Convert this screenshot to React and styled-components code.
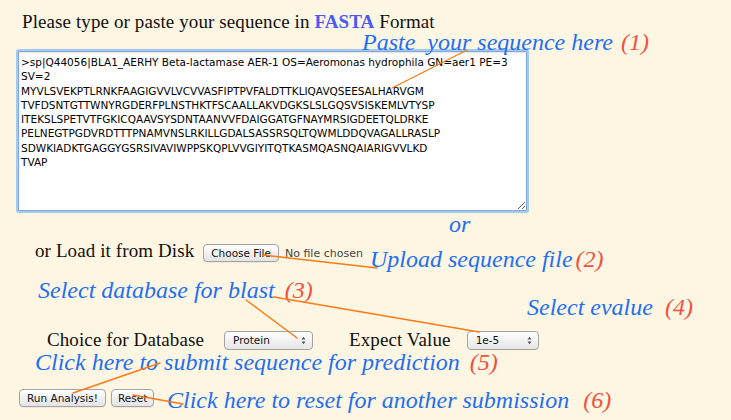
import React from "react";
import styled, { createGlobalStyle } from "styled-components";

const Global = createGlobalStyle`
  html, body { margin: 0; padding: 0; background: #fdf6e3; }
  body { font-family: "Liberation Serif", serif; }
`;

const Page = styled.div`
  position: relative;
  width: 731px;
  height: 420px;
  overflow: hidden;
  background: #fdf6e3;
  padding-top: 10px;
  box-sizing: border-box;
`;

const Heading = styled.h1`
  margin: 0 0 18px 22px;
  font-family: "Liberation Serif", serif;
  font-weight: normal;
  font-size: 19px;
  letter-spacing: 0.1px;
  line-height: 23px;
  color: #111;
`;

const Fasta = styled.span`
  color: #4b5bf2;
  font-weight: bold;
`;

const SeqBox = styled.textarea`
  display: block;
  margin-left: 18px;
  width: 509px;
  height: 160px;
  box-sizing: border-box;
  padding: 3px 2px;
  border: 1px solid #7fa9dc;
  box-shadow: 0 0 0 2px #a9c8ee, inset 0 1px 2px rgba(0,0,0,0.12);
  border-radius: 1px;
  font-family: "DejaVu Sans", sans-serif;
  font-size: 10.5px;
  line-height: 14.3px;
  color: #000;
  background: #fff;
  resize: both;
  overflow: hidden;
  white-space: pre;
  outline: none;
`;

const Row = styled.div`
  display: flex;
  align-items: baseline;
  gap: ${(p) => p.gap || 0}px;
  margin-left: ${(p) => p.indent}px;
  margin-top: ${(p) => p.top}px;
`;

const Label = styled.span`
  font-family: "Liberation Serif", serif;
  font-size: 19px;
  letter-spacing: 0.1px;
  color: #111;
  margin-left: ${(p) => p.before || 0}px;
  margin-right: ${(p) => p.after || 0}px;
`;

const MacButton = styled.button`
  font-family: "DejaVu Sans", sans-serif;
  font-size: 10.5px;
  height: 18px;
  padding: 0 ${(p) => p.pad || 7}px;
  border: 1px solid #a3a3a3;
  border-radius: 4px;
  background: linear-gradient(#ffffff, #f0f0f0 50%, #e4e4e4);
  color: #111;
  box-shadow: 0 1px 0 rgba(0,0,0,0.05);
  margin: 0;
`;

const Muted = styled.span`
  font-family: "DejaVu Sans", sans-serif;
  font-size: 11px;
  color: #444;
  margin-left: 6px;
`;

const FakeSelect = styled.div`
  display: flex;
  align-items: center;
  justify-content: space-between;
  box-sizing: border-box;
  width: ${(p) => p.w}px;
  height: 19px;
  padding: 0 6px 0 8px;
  border: 1px solid #a3a3a3;
  border-radius: 4px;
  background: linear-gradient(#ffffff, #f2f2f2 50%, #e6e6e6);
  font-family: "DejaVu Sans", sans-serif;
  font-size: 10.5px;
  color: #111;
  align-self: center;
`;

const Buttons = styled.div`
  display: flex;
  gap: 5px;
  margin: ${(p) => p.top}px 0 0 19px;
`;

const Note = styled.div`
  position: absolute;
  left: ${(p) => p.x}px;
  top: ${(p) => p.y}px;
  white-space: nowrap;
  font-family: "Liberation Serif", serif;
  font-style: italic;
  font-size: 24px;
  line-height: 24px;
  color: #1f6ff0;
`;

const Num = styled.span`
  color: #f2503c;
  margin-left: ${(p) => p.gap || 6}px;
`;

const Lines = styled.svg`
  position: absolute;
  left: 0;
  top: 0;
  pointer-events: none;
`;

const Arrows = () => (
  <svg width="5" height="9" viewBox="0 0 5 9">
    <path d="M0.5 3.5 L2.5 0.8 L4.5 3.5 Z M0.5 5.5 L2.5 8.2 L4.5 5.5 Z" fill="#555" />
  </svg>
);

const SEQ = `>sp|Q44056|BLA1_AERHY Beta-lactamase AER-1 OS=Aeromonas hydrophila GN=aer1 PE=3
SV=2
MYVLSVEKPTLRNKFAAGIGVVLVCVVASFIPTPVFALDTTKLIQAVQSEESALHARVGM
TVFDSNTGTTWNYRGDERFPLNSTHKTFSCAALLAKVDGKSLSLGQSVSISKEMLVTYSP
ITEKSLSPETVTFGKICQAAVSYSDNTAANVVFDAIGGATGFNAYMRSIGDEETQLDRKE
PELNEGTPGDVRDTTTPNAMVNSLRKILLGDALSASSRSQLTQWMLDDQVAGALLRASLP
SDWKIADKTGAGGYGSRSIVAVIWPPSKQPLVVGIYITQTKASMQASNQAIARIGVVLKD
TVAP`;

export default function App() {
  return (
    <Page>
      <Global />
      <Heading>
        Please type or paste your sequence in <Fasta>FASTA</Fasta> Format
      </Heading>
      <SeqBox defaultValue={SEQ} spellCheck={false} />
      <Row indent={35} top={29} gap={0}>
        <Label after={9}>or Load it from Disk</Label>
        <MacButton>Choose File</MacButton>
        <Muted>No file chosen</Muted>
      </Row>
      <Row indent={47} top={67} gap={0}>
        <Label after={20}>Choice for Database</Label>
        <FakeSelect w={89}>
          <span>Protein</span>
          <Arrows />
        </FakeSelect>
        <Label before={36} after={16}>Expect Value</Label>
        <FakeSelect w={72}>
          <span>1e-5</span>
          <Arrows />
        </FakeSelect>
      </Row>
      <Buttons top={38}>
        <MacButton pad={7}>Run Analysis!</MacButton>
        <MacButton pad={6}>Reset</MacButton>
      </Buttons>

      <Note x={362} y={30}>
        Paste&nbsp; your sequence here<Num gap={8}>(1)</Num>
      </Note>
      <Note x={449} y={212}>or</Note>
      <Note x={370} y={247}>
        Upload sequence file<Num gap={3}>(2)</Num>
      </Note>
      <Note x={38} y={278}>
        Select database for blast<Num gap={10}>(3)</Num>
      </Note>
      <Note x={527} y={295}>
        Select evalue<Num gap={12}>(4)</Num>
      </Note>
      <Note x={35} y={350}>
        Click here to submit sequence for prediction<Num gap={10}>(5)</Num>
      </Note>
      <Note x={167} y={388}>
        Click here to reset for another submission<Num gap={14}>(6)</Num>
      </Note>

      <Lines width="731" height="420" viewBox="0 0 731 420">
        <g stroke="#ff7a12" strokeWidth="1.4" fill="none" strokeLinecap="round">
          <line x1="467" y1="50" x2="392" y2="88" />
          <line x1="263" y1="255" x2="377" y2="268" />
          <line x1="246" y1="300" x2="297" y2="338" />
          <line x1="274" y1="297" x2="479" y2="332" />
          <line x1="160" y1="363" x2="73" y2="393" />
          <line x1="133" y1="395" x2="183" y2="404" />
        </g>
      </Lines>
    </Page>
  );
}
